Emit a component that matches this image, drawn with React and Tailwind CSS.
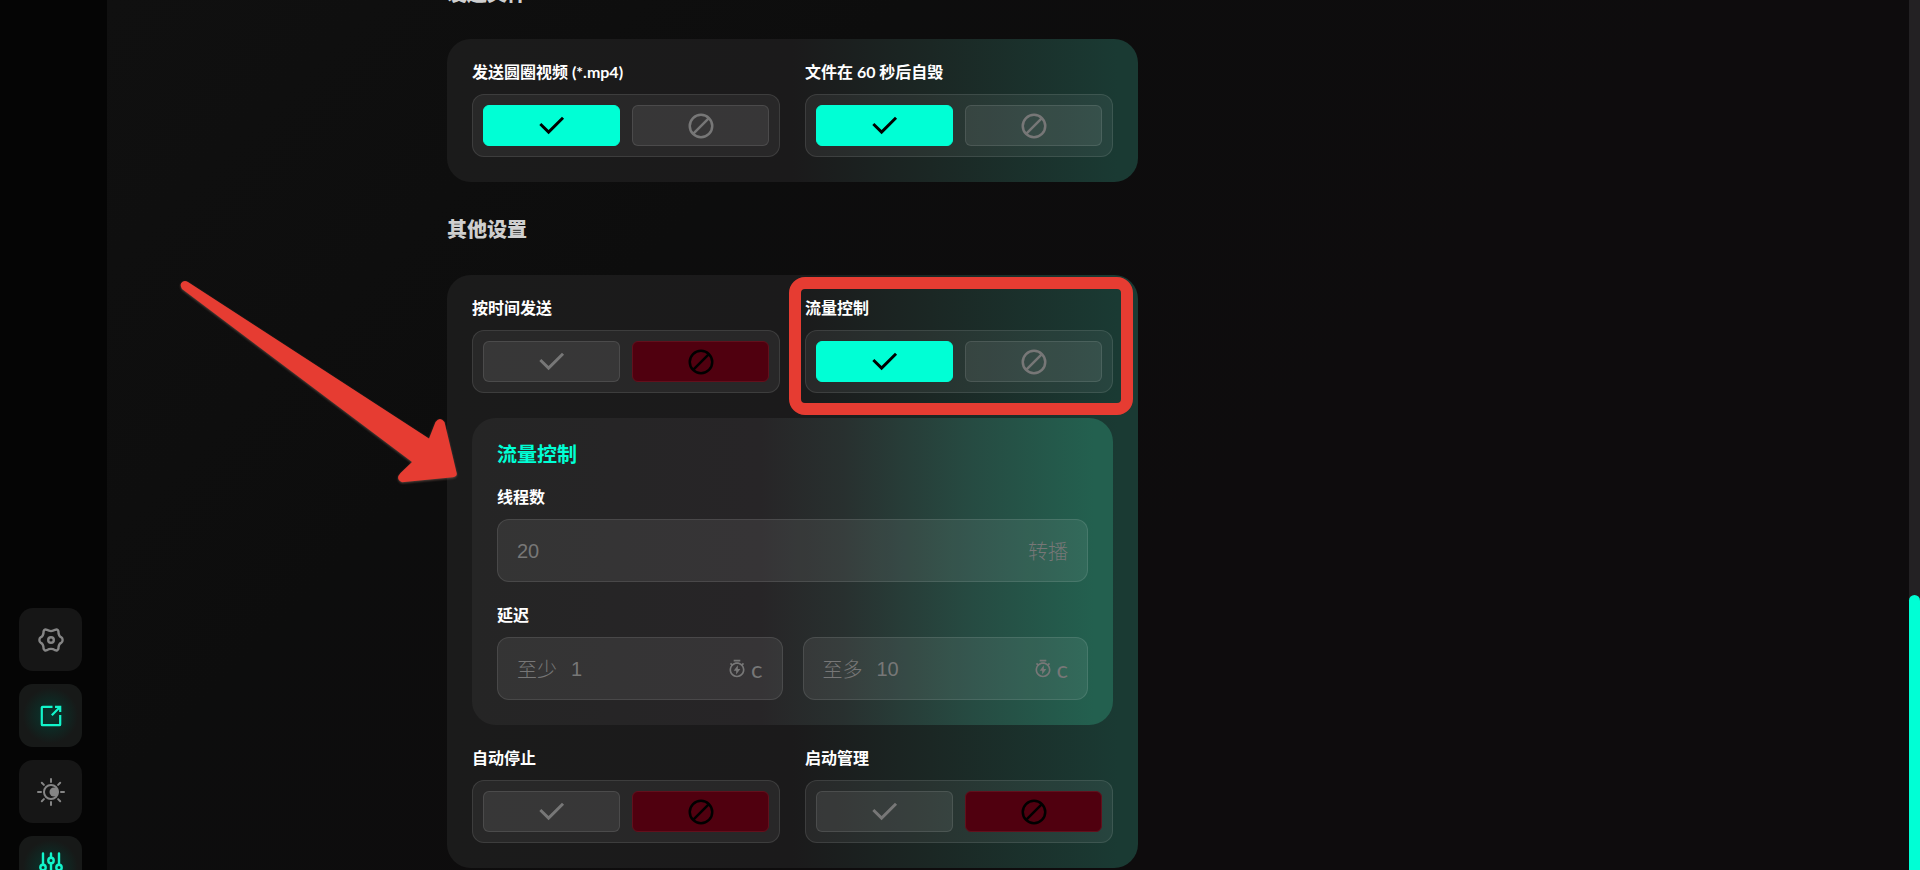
import { useState } from 'react';
import { RiCheckLine, RiTimerFlashLine } from 'react-icons/ri';

const NAV = [
  { id: 'settings', label: '设置', Icon: GearIcon },
  { id: 'share', label: '分享', Icon: ShareIcon, active: true },
  { id: 'theme', label: '主题', Icon: SunIcon },
  { id: 'tune', label: '调节', Icon: SlidersIcon, active: true },
];

function GearIcon() {
  return (
    <svg width="30" height="30" viewBox="0 0 30 30" fill="none" stroke="currentColor" strokeWidth="2.4" strokeLinejoin="round" strokeLinecap="round">
      <path d="M7.6 6.2 Q8.6 3.8 10.8 4.8 Q15 7.4 19.2 4.8 Q21.400 3.8 22.400 6.2 Q22.400 11 25.4 12.400 Q26.600 13 26.600 15 Q26.600 17 25.4 17.600 Q22.400 19 22.400 23.800 Q21.400 26.200 19.200 25.200 Q15 22.600 10.800 25.200 Q8.600 26.200 7.600 23.800 Q7.600 19 4.600 17.600 Q3.400 17 3.400 15 Q3.400 13 4.600 12.400 Q7.600 11 7.600 6.200 Z" />
      <circle cx="15" cy="15" r="2.8" />
    </svg>
  );
}

function ShareIcon() {
  return (
    <svg width="30" height="30" viewBox="0 0 30 30" fill="none" stroke="currentColor" strokeWidth="2.2">
      <path d="M16.5 5.8H6.6q-.8 0-.8.8v16.800q0 .8.8.8h16.800q.8 0 .8-.8V14" />
      <path d="M19 5.800h5.200V11M24 6l-8.200 8.200" />
    </svg>
  );
}

function SunIcon() {
  return (
    <svg width="30" height="30" viewBox="0 0 30 30" fill="none" stroke="currentColor" strokeWidth="2" strokeLinecap="round">
      <circle cx="15" cy="15" r="7" />
      <circle cx="18" cy="15" r="4.5" fill="currentColor" stroke="none" />
      <path d="M15 2v3M15 25v3M2 15h3M25 15h3M5.8 5.8l2.1 2.1M22.1 22.1l2.1 2.1M5.8 24.2l2.1-2.1M22.1 7.9l2.1-2.1" />
    </svg>
  );
}

function SlidersIcon() {
  return (
    <svg width="30" height="32" viewBox="0 0 30 32" fill="none" stroke="currentColor" strokeWidth="2.4" strokeLinecap="round">
      <path d="M7 1.5v11M7 18.5v12M15 1.5v4M15 11.5v19M23 1.5v11M23 18.5v12" />
      <circle cx="7" cy="15.5" r="2.7" />
      <circle cx="15" cy="8.5" r="2.7" />
      <circle cx="23" cy="15.5" r="2.7" />
    </svg>
  );
}

function BanIcon() {
  return (
    <svg width="30" height="30" viewBox="0 0 24 24" fill="none" stroke="currentColor" strokeWidth="2">
      <circle cx="12" cy="12" r="9" />
      <path d="M5.7 18.3 18.3 5.7" />
    </svg>
  );
}

function Toggle({ id, label, initial, children }) {
  const [on, setOn] = useState(initial);
  const base = 'flex h-[41px] items-center justify-center rounded-md border';
  const idle = 'border-white/10 bg-white/7 text-[#777777]';

  return (
    <div className="relative" role="group" aria-labelledby={id}>
      <div id={id} className="mb-3.5 text-base leading-4 font-bold whitespace-nowrap text-white">{label}</div>
      <div className="grid grid-cols-2 gap-3 rounded-xl border border-white/10 bg-white/6 p-2.5">
        <button
          type="button"
          aria-label="开启"
          aria-pressed={on}
          onClick={() => setOn(true)}
          className={`${base} ${on ? 'border-[#00ffd5] bg-[#00ffd5] text-black' : idle}`}
        >
          <RiCheckLine size={35} />
        </button>
        <button
          type="button"
          aria-label="关闭"
          aria-pressed={!on}
          onClick={() => setOn(false)}
          className={`${base} ${on ? idle : 'border-[#62101c] bg-[#50000f] text-black'}`}
        >
          <BanIcon />
        </button>
      </div>
      {children}
    </div>
  );
}

function NumberField({ id, prefix, placeholder, children }) {
  return (
    <div className="flex h-[63px] items-center gap-3.5 rounded-xl border border-white/10 bg-white/7 px-[19px] text-xl text-[#777777]">
      {prefix && <label htmlFor={id} className="shrink-0 font-light">{prefix}</label>}
      <input
        id={id}
        type="text"
        inputMode="numeric"
        placeholder={placeholder}
        className="w-0 min-w-0 flex-1 bg-transparent font-['Liberation_Sans',sans-serif] text-white outline-none placeholder:text-[#777777]"
      />
      <span className="flex shrink-0 items-center gap-1">{children}</span>
    </div>
  );
}

function Seconds() {
  return (
    <>
      <RiTimerFlashLine size={20} />
      <span className="text-2xl leading-5">c</span>
    </>
  );
}

function Card({ children }) {
  return (
    <section className="relative grid max-w-[691px] grid-cols-2 gap-[25px] rounded-3xl bg-[linear-gradient(90deg,#1b1b1b_0%,#1b1a1b_50%,#1b2724_70%,#1a3a33_97%)] p-[25px]">
      {children}
    </section>
  );
}

function TrafficPanel() {
  return (
    <div className="col-span-2 rounded-3xl bg-[linear-gradient(90deg,#252525_0%,#272527_45%,#28302f_58%,#264b42_78%,#23604f_97%)] p-[25px]">
      <h3 className="mb-6 text-xl leading-[22px] font-bold text-[#00ffd5]">流量控制</h3>
      <label htmlFor="threads" className="mb-3.5 block text-base leading-4 font-bold text-white">线程数</label>
      <NumberField id="threads" placeholder="20">
        <span className="font-light">转播</span>
      </NumberField>
      <div className="mt-[25px] mb-3.5 text-base leading-4 font-bold text-white">延迟</div>
      <div className="grid grid-cols-2 gap-5">
        <NumberField id="delay-min" prefix="至少" placeholder="1">
          <Seconds />
        </NumberField>
        <NumberField id="delay-max" prefix="至多" placeholder="10">
          <Seconds />
        </NumberField>
      </div>
    </div>
  );
}

function Arrow() {
  return (
    <svg className="pointer-events-none absolute top-[5px] -left-[267px] drop-shadow-[0_1px_1px_rgba(120,90,80,0.7)]" width="280" height="206" viewBox="0 0 280 206" aria-hidden="true">
      <path
        fill="#e63c32"
        d="M8 2 L249 158.5 L255.5 142 Q260 136 264.5 142 L276.7 193 Q277.5 196.5 273 197.2 L222 202.2 Q215 199 220.5 193 L232 182 L2 9 Q-1 4 2.5 1.8 Q5 0 8 2 Z"
      />
    </svg>
  );
}

export default function App() {
  return (
    <div className="flex h-screen overflow-hidden bg-[#0e0c0d] font-['Lato','Noto_Sans_CJK_SC',sans-serif]">
      <nav className="flex w-[107px] shrink-0 flex-col gap-[13px] bg-[#050505] pt-[608px] pl-[19px]">
        {NAV.map(({ id, label, Icon, active }) => (
          <button
            key={id}
            type="button"
            aria-label={label}
            className={`flex size-[63px] shrink-0 items-center justify-center rounded-[14px] ${
              active
                ? 'bg-[radial-gradient(circle,#06382f_0%,#171918_62%)] text-[#12f5cb]'
                : 'bg-[#161616] text-[#858585]'
            }`}
          >
            <Icon />
          </button>
        ))}
      </nav>

      <main className="min-w-0 flex-1 overflow-hidden bg-[linear-gradient(135deg,#101010_0%,#0d0d0d_30%,#0e0c0d_60%)]">
        <div className="mx-auto -mt-[21px] w-full max-w-[1122px]">
          <h2 className="mb-8 text-xl leading-7 font-black text-[#cfcfcf]">发送文件</h2>
          <Card>
            <Toggle id="round-video" label="发送圆圈视频 (*.mp4)" initial={true} />
            <Toggle id="self-destruct" label="文件在 60 秒后自毁" initial={true} />
          </Card>

          <h2 className="mt-[33px] mb-8 text-xl leading-7 font-black text-[#cfcfcf]">其他设置</h2>
          <Card>
            <Toggle id="schedule" label="按时间发送" initial={false} />
            <Toggle id="traffic" label="流量控制" initial={true}>
              <div className="pointer-events-none absolute -top-[23px] -right-5 -bottom-[22px] -left-4 rounded-2xl border-12 border-[#e63c32]" />
            </Toggle>
            <TrafficPanel />
            <Toggle id="auto-stop" label="自动停止" initial={false} />
            <Toggle id="launch" label="启动管理" initial={false} />
            <Arrow />
          </Card>
        </div>
      </main>

      {/* scroll track */}
      <div className="flex w-[11px] shrink-0 flex-col justify-end bg-[#232123]">
        <div className="h-[275px] rounded-t-full bg-[#00ffd5]" />
      </div>
    </div>
  );
}
